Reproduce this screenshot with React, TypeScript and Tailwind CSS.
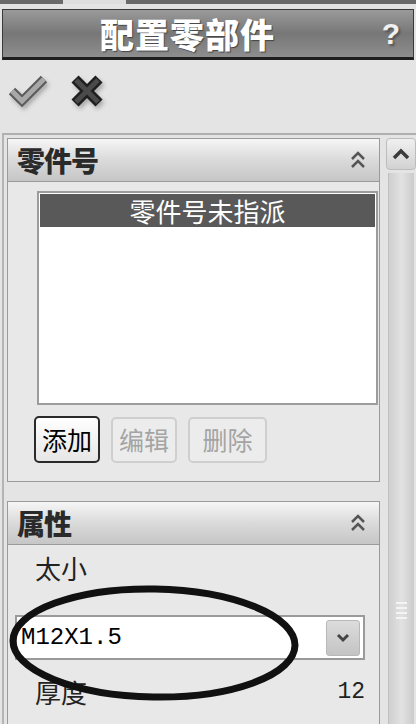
import React from "react";

const CJK = "font-['Noto_Sans_CJK_SC','Noto_Sans_CJK_SC',sans-serif]";

function DoubleUp() {
  return (
    <svg width="16" height="20" viewBox="0 0 16 20" fill="none">
      <path d="M2 9 L8 3 L14 9" stroke="#555" strokeWidth="2.5" />
      <path d="M2 17 L8 11 L14 17" stroke="#555" strokeWidth="2.5" />
    </svg>
  );
}

function PanelHeader({ title }: { title: string }) {
  return (
    <div className="h-[43px] flex items-center justify-between pl-[9px] pr-[13px] bg-gradient-to-b from-[#f6f6f6] via-[#dadada] to-[#c6c6c6] border-b border-[#9a9a9a]">
      <span className="text-[28px] leading-none font-black text-[#2a2a2a] tracking-[-1px]">{title}</span>
      <DoubleUp />
    </div>
  );
}

export default function App() {
  return (
    <div className={`w-[416px] h-[724px] overflow-hidden bg-[#e4e4e4] relative ${CJK}`}>
      {/* top strip */}
      <div className="h-[4px] bg-[#6a6a6a] flex">
        <div className="ml-[63px] w-[63px] bg-[#dedede]" />
      </div>
      <div className="h-[5px]" />
      {/* title bar */}
      <div className="mx-[2px] h-[51px] border border-[#3a3a3a] border-b-[3px] border-b-[#1e1e1e] bg-gradient-to-b from-[#9a9a9a] via-[#777777] to-[#8e8e8e] flex items-center">
        <span className="ml-[97px] text-[34px] leading-none font-black text-white tracking-[1px] [text-shadow:1px_1px_1px_#444]">
          配置零部件
        </span>
        <span className="ml-auto mr-[13px] text-[30px] leading-none font-bold text-[#f0f0f0] font-['Liberation_Sans',sans-serif] [text-shadow:2px_2px_2px_#555]">
          ?
        </span>
      </div>
      {/* toolbar */}
      <div className="h-[73px] flex items-start pt-[14px] pl-[8px] gap-[22px]">
        <svg width="40" height="34" viewBox="0 0 40 34" className="drop-shadow-[2px_3px_2px_rgba(0,0,0,0.25)]">
          <path d="M4 17 L14 27 L36 5" stroke="#5a5a5a" strokeWidth="9" fill="none" strokeLinejoin="miter" />
          <path d="M4 17 L14 27 L36 5" stroke="#a8a8a8" strokeWidth="5" fill="none" strokeLinejoin="miter" />
        </svg>
        <svg width="34" height="34" viewBox="0 0 34 34" className="drop-shadow-[2px_3px_2px_rgba(0,0,0,0.25)]">
          <path d="M5 5 L29 29 M29 5 L5 29" stroke="#1e1e1e" strokeWidth="10" />
          <path d="M6 6 L28 28 M28 6 L6 28" stroke="#4a4a4a" strokeWidth="5" />
        </svg>
      </div>
      {/* frame */}
      <div className="ml-[2px] border-t-2 border-l-2 border-t-[#b0b0b0] border-l-[#b4b4b4] flex items-start pt-[3px]">
        {/* panels column */}
        <div className="ml-[3px] w-[373px] flex flex-col gap-[19px]">
          {/* panel 1 */}
          <div className="border border-[#9a9a9a] bg-[#e8e8e8]">
            <PanelHeader title="零件号" />
            <div className="pl-[29px] pr-[1px] pt-[9px]">
              <div className="h-[214px] bg-white border-2 border-[#9c9c9c] p-[1px]">
                <div className="h-[33px] bg-[#595959] flex items-center justify-center text-white text-[26px] leading-none">
                  零件号未指派
                </div>
              </div>
              <div className="flex items-center gap-[11px] mt-[11px] -ml-[3px] pb-[18px]">
                <div className="w-[66px] h-[47px] rounded-[5px] border-2 border-[#2a2a2a] bg-gradient-to-b from-white to-[#e6e6e6] flex items-center justify-center text-[25px] leading-none text-black">
                  添加
                </div>
                <div className="w-[66px] h-[46px] rounded-[5px] border-2 border-[#cfcfcf] bg-[#ececec] flex items-center justify-center text-[25px] leading-none text-[#a4a4a4]">
                  编辑
                </div>
                <div className="w-[79px] h-[46px] rounded-[5px] border-2 border-[#cfcfcf] bg-[#ececec] flex items-center justify-center text-[25px] leading-none text-[#a4a4a4]">
                  删除
                </div>
              </div>
            </div>
          </div>
          {/* panel 2 */}
          <div className="border border-[#9a9a9a] bg-[#e8e8e8] h-[240px]">
            <PanelHeader title="属性" />
            <div className="h-[46px] flex items-center pl-[27px] text-[26px] leading-none text-[#222]">太小</div>
            <div className="h-[24px]" />
            <div className="ml-[7px] w-[350px] h-[45px] bg-white border-2 border-[#9a9a9a] flex items-center pl-[4px] pr-[3px]">
              <span className="font-['Liberation_Mono',monospace] text-[24px] leading-none text-black">M12X1.5</span>
              <div className="ml-auto w-[34px] h-[36px] rounded-[3px] bg-gradient-to-b from-[#dcdcdc] to-[#c4c4c4] border border-[#b8b8b8] flex items-center justify-center">
                <svg width="14" height="10" viewBox="0 0 14 10">
                  <path d="M2 2 L7 7 L12 2" stroke="#444" strokeWidth="3" fill="none" />
                </svg>
              </div>
            </div>
            <div className="h-[52px] flex items-center pl-[27px] pr-[14px] pt-[12px] text-[#222]">
              <span className="text-[26px] leading-none">厚度</span>
              <span className="ml-auto font-['Liberation_Mono',monospace] text-[23px] leading-none">12</span>
            </div>
          </div>
        </div>
        {/* scrollbar */}
        <div className="ml-[5px] w-[31px] flex flex-col items-center">
          <div className="w-[30px] h-[32px] rounded-[4px] border border-[#bcbcbc] bg-gradient-to-b from-[#f0f0f0] to-[#d2d2d2] flex items-center justify-center">
            <svg width="18" height="12" viewBox="0 0 18 12">
              <path d="M2 10 L9 3 L16 10" stroke="#3a3a3a" strokeWidth="3.5" fill="none" />
            </svg>
          </div>
          <div className="mt-[3px] w-[26px] h-[560px] border-l border-[#c0c0c0] bg-gradient-to-r from-[#cfcfcf] via-[#e2e2e2] to-[#cbcbcb] flex flex-col items-center">
            <div className="mt-[429px] flex flex-col gap-[3px]">
              <div className="w-[11px] h-[2px] bg-[#f4f4f4]" />
              <div className="w-[11px] h-[2px] bg-[#f4f4f4]" />
              <div className="w-[11px] h-[2px] bg-[#f4f4f4]" />
              <div className="w-[11px] h-[2px] bg-[#f4f4f4]" />
            </div>
          </div>
        </div>
      </div>
      {/* hand-drawn ellipse annotation */}
      <svg className="absolute left-[6px] top-[582px]" width="296" height="122" viewBox="0 0 296 122">
        <ellipse cx="148" cy="61" rx="141" ry="54" fill="none" stroke="#111" strokeWidth="7" transform="rotate(1 148 61)" />
      </svg>
    </div>
  );
}
